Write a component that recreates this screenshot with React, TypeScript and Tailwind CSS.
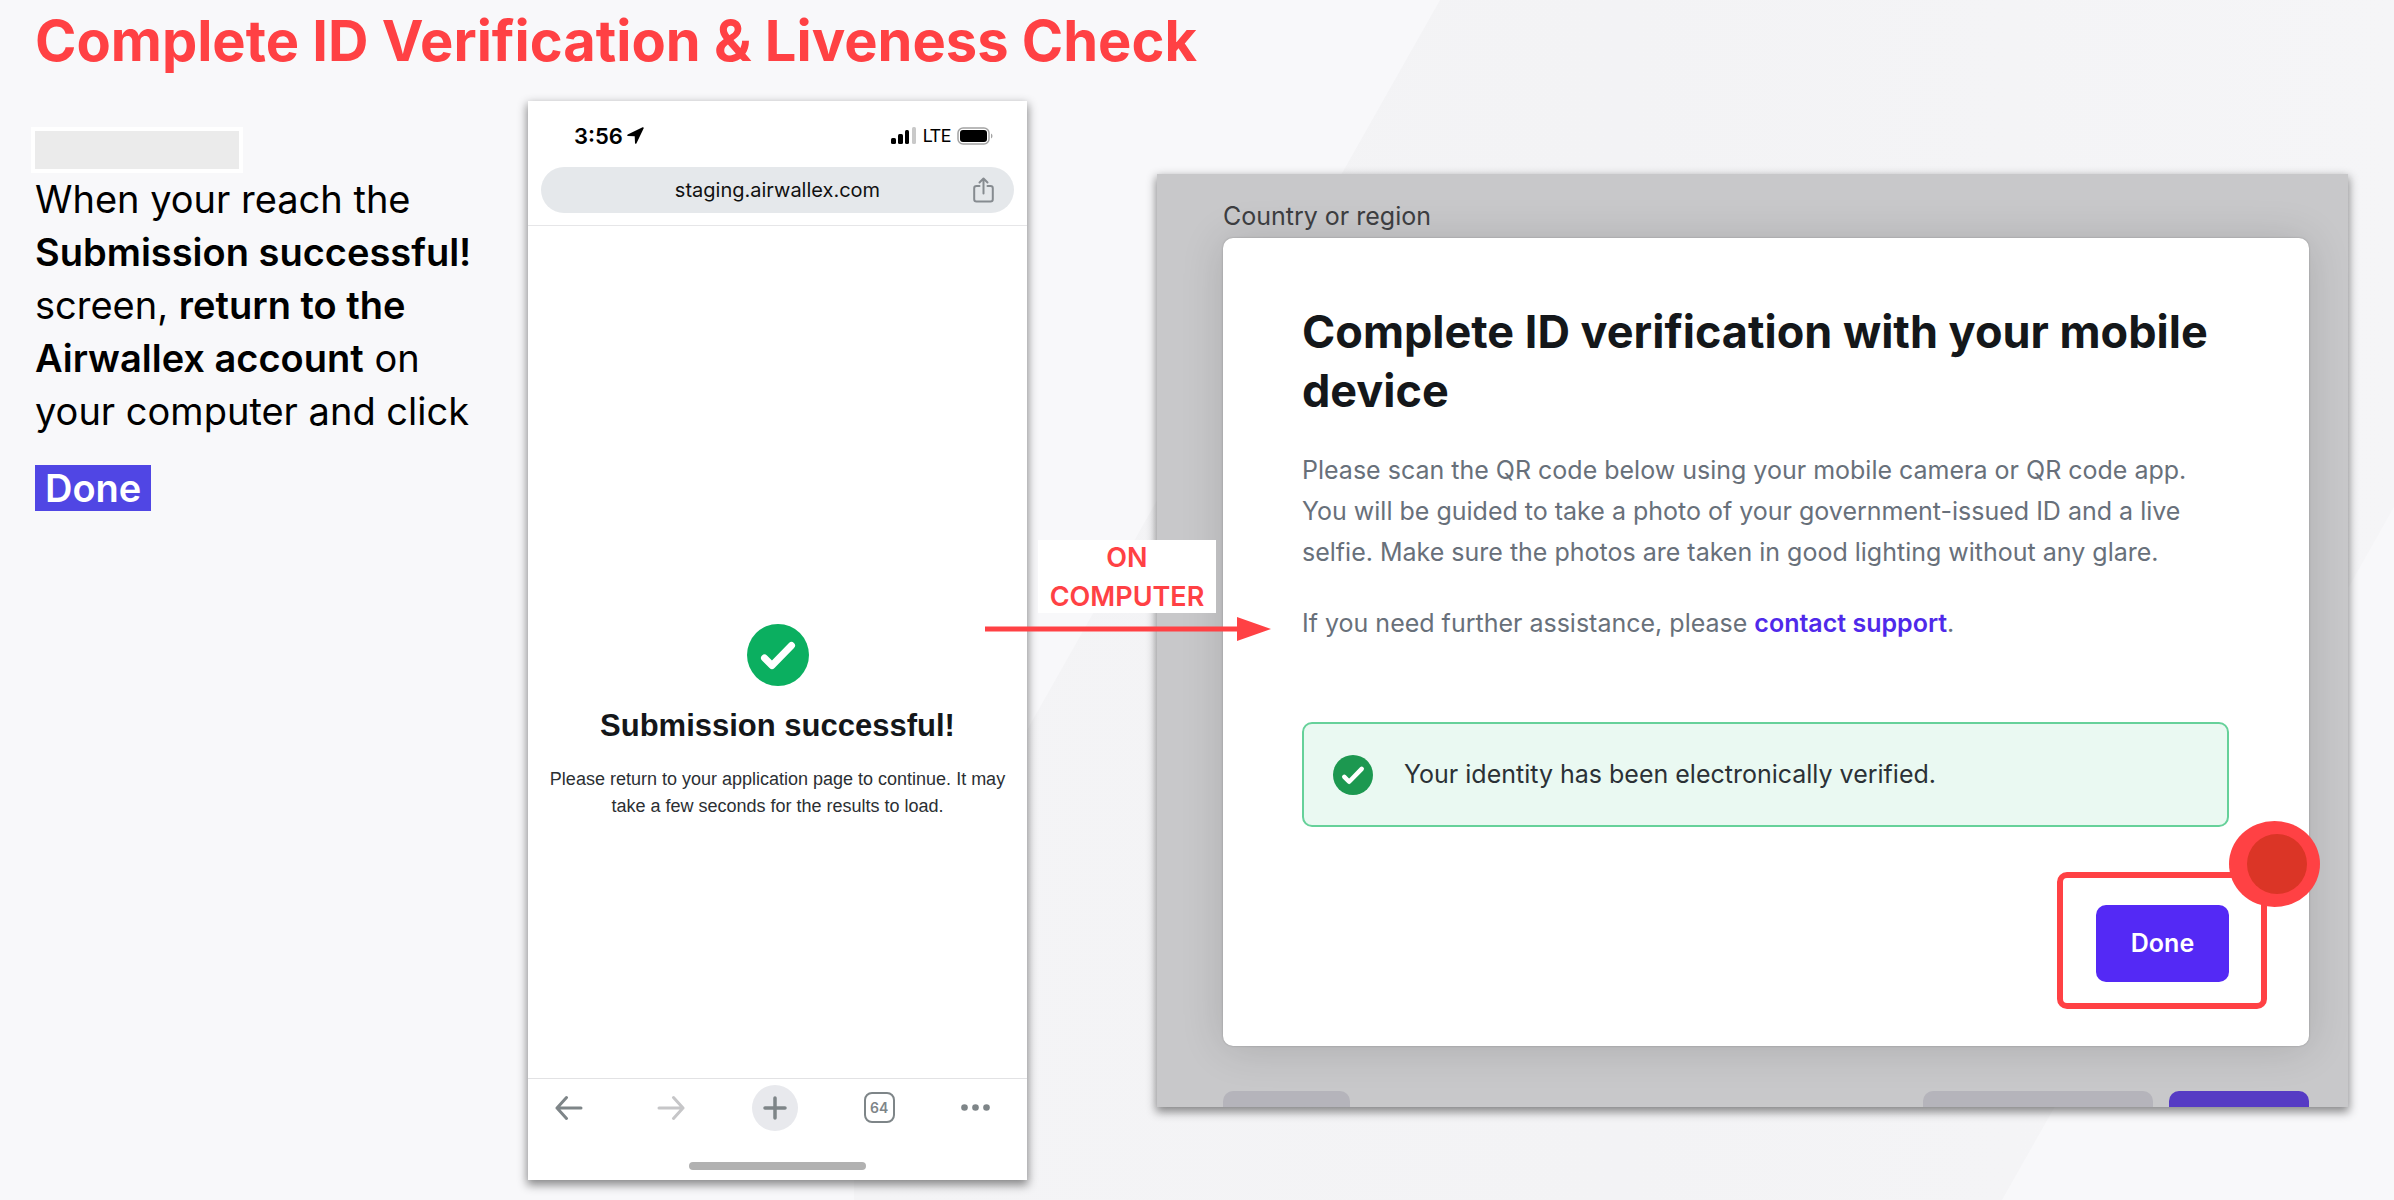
import React from 'react';

function Backdrop() {
  return (
    <svg
      aria-hidden="true"
      className="absolute inset-0 h-full w-full"
      viewBox="0 0 2394 1200"
      preserveAspectRatio="none"
    >
      <defs>
        <linearGradient id="band" x1="0" y1="0" x2="1" y2="0">
          <stop offset="0" stopColor="#f4f4f6" />
          <stop offset="0.5" stopColor="#f3f3f5" />
          <stop offset="1" stopColor="#f5f5f7" />
        </linearGradient>
      </defs>
      <path d="M1440 0H2394V507L2002 1200H854V1036Z" fill="url(#band)" />
    </svg>
  );
}

function CheckDisc({ className, tone }: { className: string; tone: string }) {
  return (
    <svg className={className} viewBox="0 0 62 62" fill="none" aria-hidden="true">
      <circle cx="31" cy="31" r="31" fill={tone} />
      <path
        d="M17.5 34L25 41.5L44.500 21.500"
        stroke="#fff"
        strokeWidth="7"
        strokeLinecap="round"
        strokeLinejoin="round"
      />
    </svg>
  );
}

function StatusBar() {
  return (
    <div className="flex h-[66px] items-center justify-between pr-[34px] pl-[46px] pt-[3px]">
      <div className="flex items-center gap-1">
        <span className="text-[22px] leading-6 font-semibold text-black">3:56</span>
        <svg className="h-[17px] w-[17px]" viewBox="0 0 17 17" aria-hidden="true">
          <path
            d="M15.600.3L.7 7.500C-.2 8 0 9 1 9.100L7.700 9.200L8 16C8.100 17 9.100 17.200 9.500 16.300L16.700 1.300C17 .6 16.300 0 15.600.3Z"
            fill="#000"
          />
        </svg>
      </div>
      <div className="flex items-center gap-[6px]">
        <svg className="h-[17px] w-[26px]" viewBox="0 0 26 17" aria-hidden="true">
          <rect x="0" y="11" width="5" height="6" rx="1.500" />
          <rect x="7" y="7" width="5" height="10" rx="1.500" />
          <rect x="14" y="3" width="4" height="14" rx="1.500" />
          <rect x="21" y="0" width="4" height="17" rx="1.500" fill="#c9c9c9" />
        </svg>
        <span className="font-['Roboto',sans-serif] text-[18px] leading-6 text-black">LTE</span>
        <svg className="h-[18px] w-[36px]" viewBox="0 0 36 18" aria-hidden="true">
          <rect x="1" y="1" width="31" height="16" rx="5" fill="none" stroke="#a3a3a3" strokeWidth="1.500" />
          <rect x="3" y="3" width="27" height="12" rx="3" />
          <path d="M34 6.500C36 7.500 36 10.500 34 11.500Z" fill="#a3a3a3" />
        </svg>
      </div>
    </div>
  );
}

function Phone() {
  return (
    <section
      aria-label="Phone"
      className="flex flex-col bg-white shadow-[0_4px_9px_1px_rgba(0,0,0,0.45)]"
    >
      <StatusBar />
      <div className="mx-[13px] flex h-[46px] items-center rounded-full bg-[#e5e8eb] pr-5 pl-[41px]">
        <span className="flex-1 text-center text-[20px] leading-6 text-[#111]">staging.airwallex.com</span>
        <button type="button" aria-label="Share">
          <svg className="h-[26px] w-[21px]" viewBox="0 0 21 26" fill="none" stroke="#868b90" strokeWidth="2" strokeLinecap="round" strokeLinejoin="round" aria-hidden="true">
            <path d="M6.500 9H3.500Q1.200 9 1.200 11.300V22.300Q1.200 24.600 3.500 24.600H17.500Q19.800 24.600 19.800 22.300V11.300Q19.800 9 17.500 9H14.500" />
            <path d="M10.500 16.500V1.500M6.500 5.500L10.500 1.500L14.500 5.500" />
          </svg>
        </button>
      </div>
      <div className="mt-3 flex flex-col items-center border-t border-[#e6e6e8] px-5 pt-[398px] pb-[258px] text-center font-['Liberation_Sans',Arial,sans-serif]">
        <CheckDisc className="h-[62px] w-[62px]" tone="#0baf60" />
        <h2 className="mt-5 text-[31px] leading-10 font-bold text-[#14171a]">Submission successful!</h2>
        <p className="mt-5 text-[18px] leading-[27px] text-[#2b2f33]">
          Please return to your application page to continue. It may take a few seconds for the results to load.
        </p>
      </div>
      <nav aria-label="Browser" className="flex h-[58px] items-center justify-between border-t border-[#e2e2e4] pr-[37px] pl-[27px] text-[#7e8588]">
        <button type="button" aria-label="Back">
          <svg className="h-[26px] w-[28px]" viewBox="0 0 28 26" fill="none" stroke="currentColor" strokeWidth="3" strokeLinecap="round" strokeLinejoin="round" aria-hidden="true">
            <path d="M26 13H2M11.500 2.500L2 13L11.500 23.500" />
          </svg>
        </button>
        <button type="button" aria-label="Forward" className="ml-2 text-[#c6c6c8]">
          <svg className="h-[26px] w-[28px]" viewBox="0 0 28 26" fill="none" stroke="currentColor" strokeWidth="3" strokeLinecap="round" strokeLinejoin="round" aria-hidden="true">
            <path d="M2 13H26M16.500 2.500L26 13L16.500 23.500" />
          </svg>
        </button>
        <button type="button" aria-label="New tab" className="flex h-[46px] w-[46px] items-center justify-center rounded-full bg-[#e8e9ed]">
          <svg className="h-6 w-6" viewBox="0 0 24 24" stroke="currentColor" strokeWidth="3.500" strokeLinecap="round" aria-hidden="true">
            <path d="M12 2V22M2 12H22" />
          </svg>
        </button>
        <button type="button" aria-label="64 open tabs" className="flex h-[31px] w-[31px] items-center justify-center rounded-lg border-[2px] border-current text-[14px] font-semibold">
          64
        </button>
        <button type="button" aria-label="More">
          <svg className="h-[7px] w-[29px]" viewBox="0 0 29 7" fill="currentColor" aria-hidden="true">
            <circle cx="3.500" cy="3.500" r="3.300" />
            <circle cx="14.500" cy="3.500" r="3.300" />
            <circle cx="25.500" cy="3.500" r="3.300" />
          </svg>
        </button>
      </nav>
      <div className="mx-auto mt-[26px] mb-[10px] h-2 w-[177px] rounded-full bg-[#b1b1b1]" />
    </section>
  );
}

function Connector() {
  return (
    <div className="relative z-10">
      <p className="absolute top-[439px] left-[11px] flex h-[73px] w-[178px] items-center justify-center bg-white text-center text-[27px] leading-[39px] font-semibold text-[#ff4144]">
        ON
        <br />
        COMPUTER
      </p>
      <svg className="absolute top-[516px] -left-[42px] h-6 w-[286px]" viewBox="0 0 286 24" fill="#ff4144" aria-hidden="true">
        <path d="M0 9.500H252V0L286 12L252 24V14.500H0Z" />
      </svg>
    </div>
  );
}

function Computer() {
  return (
    <section
      aria-label="Computer"
      className="mt-[73px] bg-[#c8c8ca] pt-[27px] pr-[39px] pl-[66px] shadow-[0_4px_9px_1px_rgba(0,0,0,0.45)]"
    >
      <p className="mb-[7px] text-[25px] leading-[30px] text-[#3c3d40]">Country or region</p>
      <div className="rounded-[10px] bg-white pt-16 pr-20 pb-16 pl-[79px] shadow-[0_0_2px_rgba(0,0,0,0.25),0_2px_44px_rgba(0,0,0,0.14)]">
        <h2 className="text-[45px] leading-[59px] font-bold text-[#14171a]">
          Complete ID verification with your mobile device
        </h2>
        <p className="mt-[30px] text-[25px] leading-[41px] text-[#68707a]">
          Please scan the QR code below using your mobile camera or QR code app. You will be guided to take a photo of
          your government-issued ID and a live selfie. Make sure the photos are taken in good lighting without any
          glare.
        </p>
        <p className="mt-[30px] text-[25px] leading-[41px] text-[#68707a]">
          If you need further assistance, please{' '}
          <a href="#support" className="font-semibold text-[#4f29ea]">
            contact support
          </a>
          .
        </p>
        <div role="status" className="mt-[78px] flex h-[105px] items-center gap-[31px] rounded-[10px] border-2 border-[#66d19a] bg-[#eaf9f2] pl-[29px]">
          <CheckDisc className="h-10 w-10 shrink-0" tone="#1c9850" />
          <p className="text-[25px] leading-[41px] text-[#2b3136]">Your identity has been electronically verified.</p>
        </div>
        <div className="mt-[78px] flex justify-end">
          <div className="relative">
            <button type="button" className="h-[77px] w-[133px] rounded-[10px] bg-[#5429f5] text-[25px] font-semibold text-white">
              Done
            </button>
            <span className="pointer-events-none absolute -top-[33px] -right-[38px] -bottom-[27px] -left-[39px] rounded-[10px] border-[6px] border-[#ff4144]" />
            <span className="pointer-events-none absolute -top-[84px] -right-[91px] flex h-[86px] w-[91px] items-center justify-center rounded-[50%] bg-[#ff4144] pl-[5px]">
              <span className="h-[60px] w-[60px] rounded-full bg-[#db3526]" />
            </span>
          </div>
        </div>
      </div>
      <div className="mt-[45px] flex h-4 gap-4">
        <span className="mr-auto w-[127px] rounded-t-[10px] bg-[#b5b4bb]" />
        <span className="w-[230px] rounded-t-[10px] bg-[#b5b4bb]" />
        <span className="w-[140px] rounded-t-[10px] bg-[#563bc4]" />
      </div>
    </section>
  );
}

export default function App() {
  return (
    <main className="relative min-h-screen overflow-hidden bg-[#f8f8fa] font-['Inter',sans-serif]">
      <Backdrop />
      <div className="relative pt-[9px] pr-[46px] pb-4 pl-[35px]">
        <h1 className="text-[56px] leading-[64px] font-bold text-[#ff4144]">Complete ID Verification &amp; Liveness Check</h1>
        <div className="mt-7 grid grid-cols-[minmax(0,493fr)_minmax(0,499fr)_minmax(0,130fr)_minmax(0,1191fr)] items-start">
          <section className="pt-[26px] pr-11">
            <div className="-ml-1 h-[46px] w-[212px] border-4 border-white bg-[#ebebeb]" />
            <p className="text-[38px] leading-[53px] text-black">
              When your reach the <strong className="font-semibold">Submission successful!</strong> screen,{' '}
              <strong className="font-semibold">return to the Airwallex account</strong> on your computer and click
            </p>
            <p className="mt-[27px] flex h-[46px] w-fit items-center bg-[#5046e4] px-[10px] text-[38px] leading-[46px] font-semibold text-white">
              Done
            </p>
          </section>
          <Phone />
          <Connector />
          <Computer />
        </div>
      </div>
    </main>
  );
}
